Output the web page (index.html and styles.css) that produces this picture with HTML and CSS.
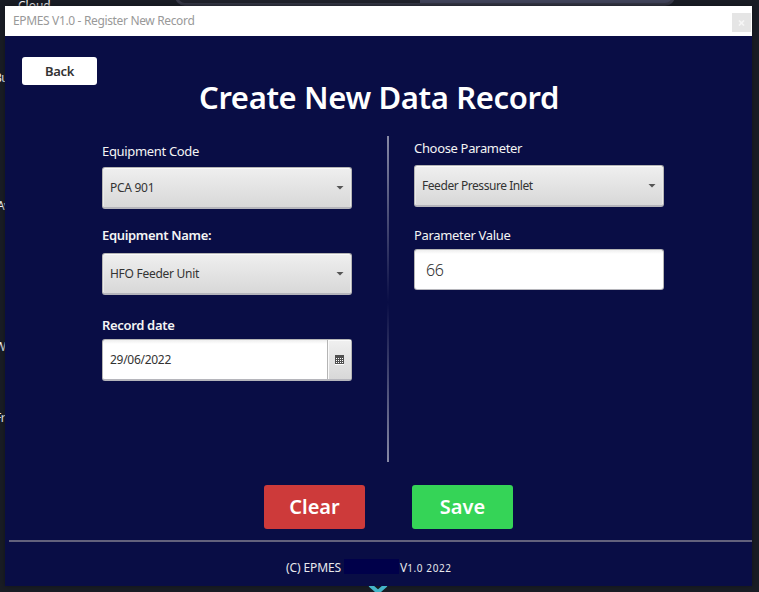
FILE: index.html
```html
<!DOCTYPE html>
<html lang="en">
<head>
<meta charset="utf-8">
<title>EPMES V1.0 - Register New Record</title>
<link rel="stylesheet" href="styles.css">
</head>
<body>
<div class="desktop">
  <span class="behind behind-cloud">Cloud</span>
  <span class="behind-bar"></span>
  <span class="behind behind-bu">Bu</span>
  <span class="behind behind-av">Av</span>
  <span class="behind behind-w">W</span>
  <span class="behind behind-fr">Fr</span>
  <div class="window">
    <header class="titlebar">
      <span class="title">EPMES V1.0 - Register New Record</span>
      <button class="close" aria-label="Close"><svg width="7" height="6" viewBox="0 0 7 6"><path d="M1 .5l5 5M6 .5l-5 5" stroke="#f6f6f6" stroke-width="1.7"/></svg></button>
    </header>
    <main class="content">
      <button class="back"><span>Back</span></button>
      <h1><span>Create New Data Record</span></h1>
      <div class="form">
        <section class="column column-left">
          <label>Equipment Code</label>
          <div class="control select"><span>PCA 901</span><i class="arrow"></i></div>
          <label class="strong t-name">Equipment Name:</label>
          <div class="control select"><span>HFO Feeder Unit</span><i class="arrow"></i></div>
          <label class="strong">Record date</label>
          <div class="control date"><span>29/06/2022</span>
            <i class="calendar"><svg width="9" height="10" viewBox="0 0 9 10" shape-rendering="crispEdges"><path d="M0 0h9v9H0z" fill="#505050"/><path d="M0 9h9v1H0z" fill="#fff"/><path d="M1 3.5h7M1 5.5h7M1 7.5h7" stroke="#fff" stroke-dasharray="1 1"/></svg></i>
          </div>
        </section>
        <div class="divider"></div>
        <section class="column column-right">
          <label>Choose Parameter</label>
          <div class="control select"><span class="v-feed">Feeder Pressure Inlet</span><i class="arrow"></i></div>
          <label>Parameter Value</label>
          <div class="control value"><span>66</span></div>
        </section>
      </div>
      <div class="actions">
        <button class="clear"><span>Clear</span></button>
        <button class="save"><span>Save</span></button>
      </div>
      <footer><span class="f-name">(C) EPMES</span><span class="redacted"></span><span class="f-version">V<small>1.0 2022</small></span></footer>
    </main>
  </div>
  <svg class="behind-mark" width="20" height="6" viewBox="0 0 20 6"><path d="M2-1l8 7 8-7" fill="none" stroke="#45b5c8" stroke-width="4"/></svg>
</div>
</body>
</html>
```
FILE: styles.css
```css
* { box-sizing: border-box; }
body { margin: 0; font-family: "Noto Sans", "Open Sans", sans-serif; }
button { border: 0; padding: 0; font: inherit; }
svg { display: block; }
.desktop { position: relative; width: 759px; height: 592px; padding: 6px 7px 6px 5px; overflow: hidden; background: #1a1d25; }
.behind { position: absolute; color: #fff; font-size: 12px; line-height: 16px; letter-spacing: -.6px; }
.behind-cloud { left: 18px; top: -2px; letter-spacing: 0; }
.behind-bu { left: -6px; top: 70px; }
.behind-av { left: -3px; top: 198px; }
.behind-w { left: -5px; top: 339px; }
.behind-fr { left: -5px; top: 410px; }
.behind-bar { position: absolute; left: 175px; top: -14px; width: 500px; height: 20px; border-radius: 10px; border: 3px solid #393a49; background: linear-gradient(90deg, #20222b 49%, #42455b 49%); }
.behind-mark { position: absolute; left: 368px; top: 586px; }
.window { position: relative; height: 580px; display: flex; flex-direction: column; background: #090d45; box-shadow: 0 0 5px #111319; }
.titlebar { height: 30px; flex: none; display: flex; justify-content: space-between; background: #fff; padding-left: 8px; }
.title { font-size: 12px; line-height: 30px; color: #999; letter-spacing: -.35px; white-space: nowrap; }
.close { width: 19px; height: 19px; margin: 7px 1px 0 0; background: #e5e5e5; display: grid; place-items: center; }
.content { flex: 1; display: flex; flex-direction: column; padding-top: 21px; }
.back { width: 75px; height: 28px; margin-left: 17px; border-radius: 3px; background: #fff; color: #333; font-size: 13px; line-height: 26px; font-weight: 600; letter-spacing: -.3px; }
h1 { margin: -9px 0 0 194px; height: 43px; font-size: 31px; line-height: 42px; font-weight: 600; letter-spacing: -.37px; color: #fff; white-space: nowrap; }
.form { height: 326px; margin: 17px 0 0 97px; display: flex; }
.column { width: 250px; display: flex; flex-direction: column; }
.column-left { padding-top: 5px; }
.column-right { padding-top: 2px; margin-left: 25px; }
label { height: 20px; font-size: 13px; line-height: 20px; letter-spacing: -.33px; color: #f4f4f4; white-space: nowrap; }
.strong { font-weight: 600; }
.t-name { line-height: 18px; }
.control { display: flex; align-items: center; height: 42px; border: 1px solid #b5b5b5; border-bottom: 2px solid #b5b5bb; border-radius: 3px; font-size: 12px; letter-spacing: -.28px; color: #333; white-space: nowrap; }
.select { margin: 6px 0 17px; justify-content: space-between; padding: 0 7px; background: linear-gradient(#efefef, #d8d8d8); box-shadow: inset 0 1px #fafafa, inset 1px 0 #ebebeb, inset -1px 0 #ebebeb; }
.v-feed { letter-spacing: -.44px; }
.arrow { width: 8px; height: 4px; background: #555; clip-path: polygon(0 0, 100% 0, 50% 100%); }
.t-name + .select { margin: 7px 0 20px; }
.date { margin-top: 4px; padding-left: 7px; justify-content: space-between; background: linear-gradient(#eee, #fff 4px); }
.calendar { align-self: stretch; width: 24px; border-left: 1px solid #b5b5b5; display: grid; place-items: center; background: linear-gradient(#f0f0f0, #d8d8d8); box-shadow: inset 1px 1px #fafafa; }
.column-right .select { margin: 7px 0 18px; }
.value { height: 41px; margin-top: 4px; padding-left: 11px; border-bottom-width: 1px; background: linear-gradient(#eee, #fff 4px); font-size: 16px; font-weight: 300; }
.divider { width: 2px; margin-left: 35px; background: linear-gradient(#8789a5, #090d45 51%, #8789a5); }
.actions { display: flex; gap: 47px; margin: 23px 0 0 259px; }
.actions button { width: 101px; height: 44px; border-radius: 3px; color: #fff; font-size: 20px; line-height: 42px; font-weight: 600; }
.actions .clear { background: #cd3a3a; }
.actions .save { background: #35d457; }
footer { height: 46px; margin: 11px 0 0 4px; border-top: 2px solid #62617c; display: flex; align-items: center; padding: 8px 0 0 277px; color: #e8e8ec; font-size: 12px; line-height: 16px; white-space: nowrap; }
.f-name { width: 58px; letter-spacing: -.1px; }
.redacted { width: 55px; height: 15px; background: #00004a; margin-top: -3px; }
.f-version { margin-left: 1px; }
.f-version small { font-size: 10px; letter-spacing: .6px; }
```
